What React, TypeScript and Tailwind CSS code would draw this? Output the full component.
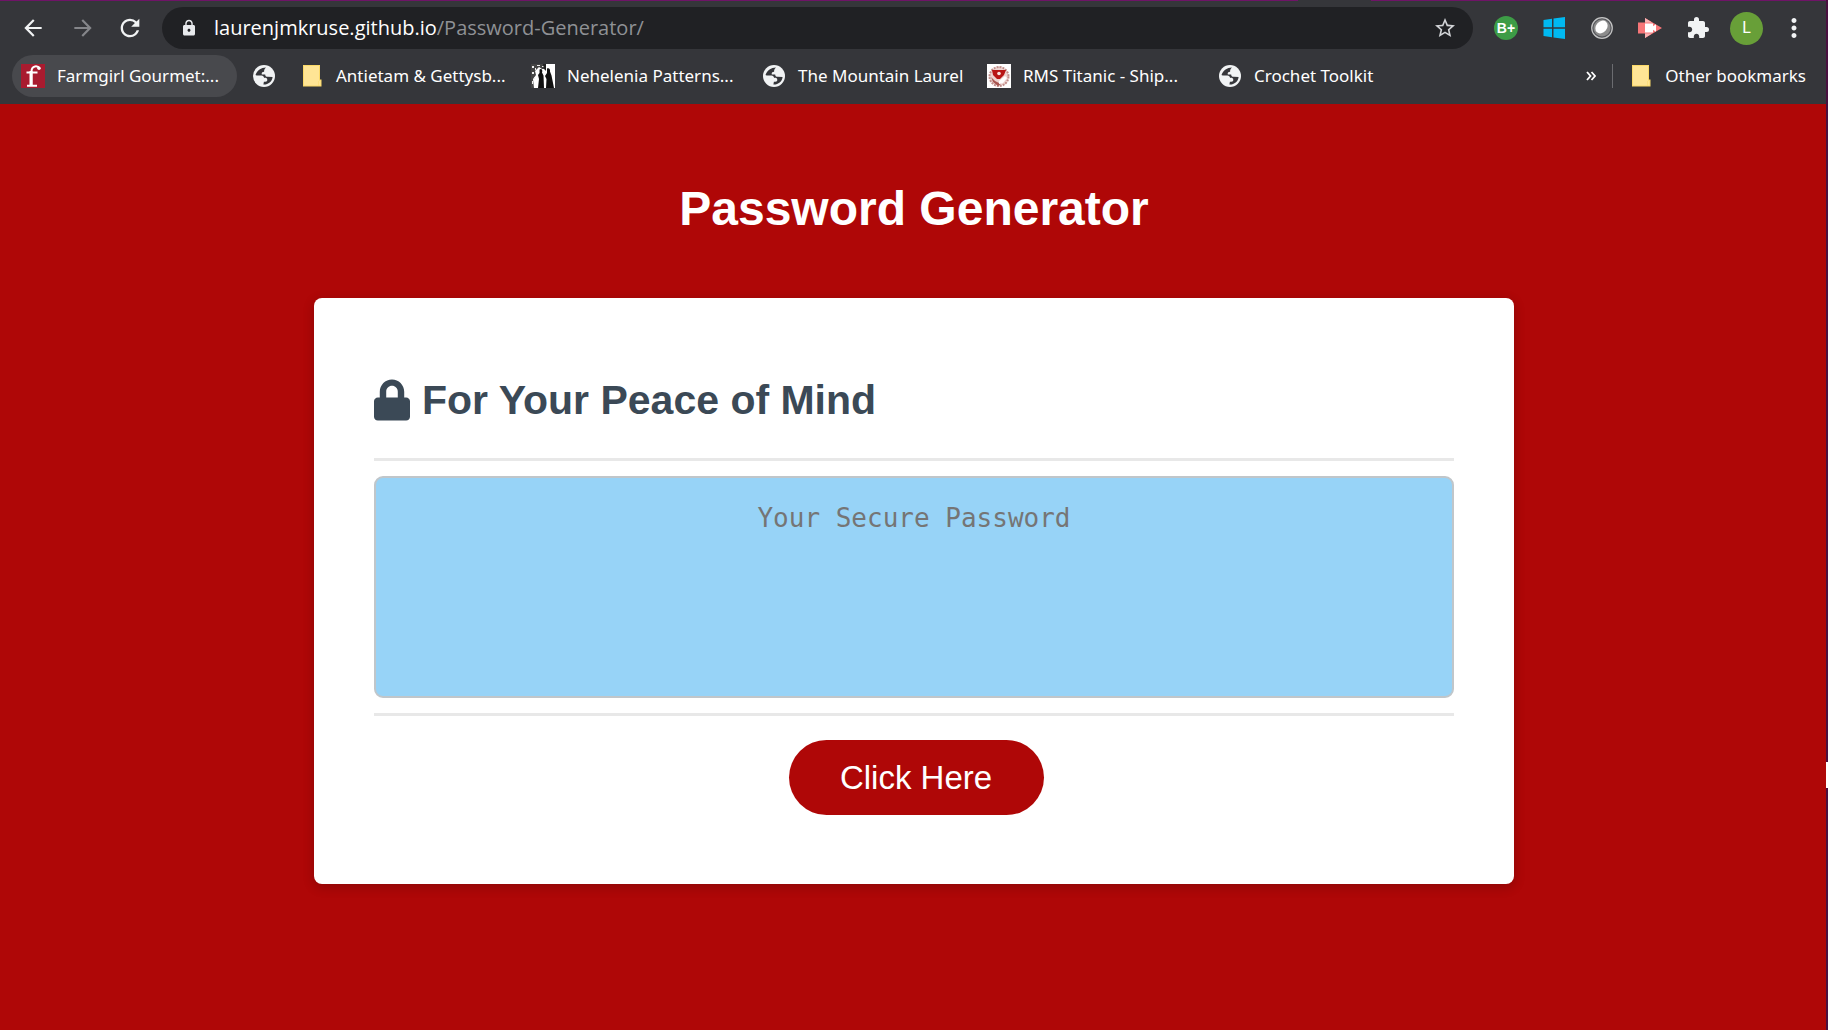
import React from "react";
import { FaLock } from "react-icons/fa";
import {
  MdArrowBack,
  MdArrowForward,
  MdRefresh,
  MdLock,
  MdStarBorder,
  MdExtension,
  MdMoreVert,
} from "react-icons/md";

function FolderIcon() {
  return (
    <svg viewBox="0 0 24 24" className="size-6 shrink-0" aria-hidden="true">
      <path d="M3 1h17v14.500h1.500v7H3z" fill="#fbd968" />
      <path d="M4 2h15v15H18v4.500H4z" fill="#ffe595" />
      <path d="M18.500 16.500h2v5h-2z" fill="#ffe595" />
    </svg>
  );
}

function GlobeIcon() {
  return (
    <svg viewBox="0 0 24 24" className="size-6 shrink-0" aria-hidden="true">
      <circle cx="12" cy="12" r="11" fill="#f1f3f4" />
      <path
        d="M14 3.500c-5 .2-8.600 2.500-10.500 7.500l1.200.5h4.800c1.600 0 2.300 1 2.600 2.400 1.700-.2 3.200.2 3.200 2 0 1.500-1.500 1.800-3.400 1.800l-.5 2.800c4.500.3 8.600-2.600 9.200-7.500l-4.800-.2c-1.800 0-2.600-.9-2.600-2.400H9.800c-.4-1.600.3-2.700 2.300-2.700 0-1.700.3-3 1.900-4.200z"
        fill="#35363a"
      />
    </svg>
  );
}

function FarmgirlIcon() {
  return (
    <svg viewBox="0 0 24 24" className="size-6 shrink-0" aria-hidden="true">
      <rect width="24" height="24" fill="#a91b2f" />
      <path
        d="M18.500 4.500C17 1.500 10.500 1 10.500 7.500v14M5.500 8.500h11M6 21.800h10"
        fill="none"
        stroke="#fff"
        strokeWidth="2"
      />
      <path d="M10 7v14.500" stroke="#fff" strokeWidth="3" />
      <circle cx="18" cy="4.300" r="1.700" fill="#fff" />
    </svg>
  );
}

function SilhouetteIcon() {
  return (
    <svg viewBox="0 0 24 24" className="size-6 shrink-0" aria-hidden="true">
      <rect width="24" height="24" fill="#fff" />
      <path d="M0 0h15v5h-4L8 3 4 7l1 4-3 4 1 9H0z" fill="#444" />
      <path d="M1 2h2v2H1zM4 4h1v2H4zM1 8h2v2H1zM3 13h1v2H3zM1 17h1v3H1zM6 1h3v1H6zM11 2h2v1h-2z" fill="#eee" />
      <path d="M8.500 5.500c2-1.500 3.500.5 2.500 3l1.500 3L13 24H7l1-9-1-4 1.500-2z" fill="#111" />
      <path d="M16 4.500c2-1 3.500.5 3 3l1.500 4L23 24h-8l.5-9L14 12l2-3z" fill="#111" />
      <path d="M12 0h3v7l-2-2z" fill="#222" />
    </svg>
  );
}

function TitanicIcon() {
  return (
    <svg viewBox="0 0 24 24" className="size-6 shrink-0" aria-hidden="true">
      <rect width="24" height="24" fill="#fff" />
      <circle cx="12" cy="12.500" r="9.500" fill="#eed3d0" stroke="#c08c88" strokeWidth="2" strokeDasharray="2 1" />
      <path d="M5 6h14l-2 5-4 4h-3l-4-4z" fill="#b81414" />
      <circle cx="12" cy="9.500" r="1.800" fill="#f7e3e0" />
      <path d="M4 13l4 4 6 3-3 2-5-4z" fill="#a85550" />
      <path d="M12 17l6-5 2 2-4 5-4 1z" fill="#fff" />
    </svg>
  );
}

const extensions = [
  {
    label: "Grade extension",
    icon: (
      <span className="flex size-6 items-center justify-center rounded-full bg-[#3d9c46] font-['Liberation_Sans'] text-sm font-bold text-white">
        B+
      </span>
    ),
  },
  {
    label: "Windows",
    icon: (
      <svg viewBox="0 0 24 24" className="size-6" aria-hidden="true">
        <path
          d="M1.500 4l8.500-1.200v8.400H1.500zM11.500 2.600L23 1v10.200H11.500zM1.500 12.800H10v8.400L1.500 20zM11.500 12.800H23V23l-11.500-1.600z"
          fill="#00b9f1"
        />
      </svg>
    ),
  },
  {
    label: "Sphere",
    icon: (
      <svg viewBox="0 0 24 24" className="size-6" aria-hidden="true">
        <circle cx="12" cy="12" r="10.300" fill="#55565a" stroke="#c4c4c4" strokeWidth="1.200" />
        <circle cx="12" cy="12" r="8.500" fill="#8c8c8c" />
        <ellipse cx="11.500" cy="11" rx="5.500" ry="7" transform="rotate(40 11.500 11)" fill="#fff" />
      </svg>
    ),
  },
  {
    label: "Screen recorder",
    icon: (
      <svg viewBox="0 0 24 24" className="size-6" aria-hidden="true">
        <path d="M0 6.500h7V2l17 10L7 22v-4.500H0z" fill="#f77678" />
        <path d="M7 2l7 4.500H7zM7 17.500h7L7 22z" fill="#fbb3b3" />
        <path d="M7 7.500h8v2.800l3-2v7.500l-3-2v2.800H7z" fill="#fff" />
      </svg>
    ),
  },
  { label: "Extensions", icon: <MdExtension className="size-6 text-[#f1f3f4]" /> },
];

const bookmarks = [
  { label: "Farmgirl Gourmet:...", icon: <FarmgirlIcon />, box: "w-[225px] rounded-full bg-[#48494d]" },
  { label: "", icon: <GlobeIcon />, box: "" },
  { label: "Antietam & Gettysb...", icon: <FolderIcon />, box: "w-[225px]" },
  { label: "Nehelenia Patterns...", icon: <SilhouetteIcon />, box: "w-[225px]" },
  { label: "The Mountain Laurel", icon: <GlobeIcon />, box: "w-[219px]" },
  { label: "RMS Titanic - Ship...", icon: <TitanicIcon />, box: "w-[225px]" },
  { label: "Crochet Toolkit", icon: <GlobeIcon />, box: "" },
];

function BrowserChrome() {
  return (
    <header className="bg-[#35363a] font-['Noto_Sans',sans-serif] text-white">
      <div className="flex h-px justify-between">
        <span className="w-[71%] bg-[#6f1467]" />
        <span className="w-[25%] bg-[#6f1467]" />
      </div>
      <div className="flex h-[54px] items-center pr-[19px] pl-5">
        <nav className="flex items-center gap-6" aria-label="History">
          <button type="button" aria-label="Back">
            <MdArrowBack className="size-[26px] text-[#f1f3f4]" />
          </button>
          <button type="button" aria-label="Forward">
            <MdArrowForward className="size-[26px] text-[#85868a]" />
          </button>
          <button type="button" aria-label="Reload" className="-ml-1">
            <MdRefresh className="size-7 text-[#f1f3f4]" />
          </button>
        </nav>
        <div className="ml-[18px] flex h-[42px] flex-1 items-center rounded-full bg-[#202124] pr-4 pl-[18px]">
          <MdLock className="size-[18px] text-[#e8eaed]" />
          <a href="#address" className="ml-4 flex-1 font-['Open_Sans',sans-serif] text-xl text-[#8f9195]">
            <span className="text-white">laurenjmkruse.github.io</span>/Password-Generator/
          </a>
          <button type="button" aria-label="Bookmark this page">
            <MdStarBorder className="size-6 text-[#d2d4d7]" />
          </button>
        </div>
        <div className="ml-[21px] flex items-center gap-6">
          {extensions.map((e) => (
            <button key={e.label} type="button" aria-label={e.label}>
              {e.icon}
            </button>
          ))}
        </div>
        <button
          type="button"
          className="ml-5 flex size-[33px] items-center justify-center rounded-full bg-[#689f38] font-[Roboto] text-base"
        >
          L
        </button>
        <button type="button" aria-label="Menu" className="ml-4">
          <MdMoreVert className="size-[30px] text-[#f1f3f4]" />
        </button>
      </div>
      <div className="flex h-[49px] items-start gap-1.5 pr-[22px] pl-3 text-[17px] whitespace-nowrap">
        {bookmarks.map((b, i) => (
          <a
            key={i}
            href="#bookmark"
            aria-label={b.label || "Bookmark"}
            className={"flex h-[42px] shrink-0 items-center gap-3 px-[9px] " + b.box}
          >
            {b.icon}
            {b.label && <span>{b.label}</span>}
          </a>
        ))}
        <div className="ml-auto flex h-[42px] items-center">
          <button type="button" aria-label="More bookmarks">
            <svg viewBox="0 0 10 10" className="size-2.5" aria-hidden="true">
              <path d="M1 1l3.500 4L1 9M5.500 1L9 5 5.500 9" fill="none" stroke="#fff" strokeWidth="1.800" />
            </svg>
          </button>
          <span className="ml-4 h-6 w-px bg-[#6b6c70]" />
          <a href="#other" className="ml-4 flex items-center gap-3">
            <FolderIcon />
            Other bookmarks
          </a>
        </div>
      </div>
    </header>
  );
}

export default function App() {
  return (
    <div className="relative flex min-h-screen flex-col bg-[#af0707] font-['Liberation_Sans',Arial,sans-serif]">
      <BrowserChrome />
      <main className="flex flex-1 flex-col items-center px-6">
        <h1 className="mt-[75px] text-center text-5xl leading-[60px] font-bold text-white">Password Generator</h1>
        <section className="mt-[59px] mb-16 w-full max-w-[1200px] rounded-lg bg-white px-[60px] pt-[75px] pb-[69px] shadow-[0_3px_12px_rgba(0,0,0,0.2)]">
          <h2 className="flex items-center gap-3 text-[41px] leading-[54px] font-bold text-[#3b4956]">
            <FaLock className="h-[42px] w-9" />
            For Your Peace of Mind
          </h2>
          <div className="mt-[31px] border-y-3 border-[#e8e8e8] py-[15px]">
            <textarea
              aria-label="Your Secure Password"
              placeholder="Your Secure Password"
              readOnly
              className="block h-[222px] w-full resize-none rounded-[9px] border-2 border-[#c0c6ca] bg-[#97d3f7] px-6 py-6 text-center font-['DejaVu_Sans_Mono',monospace] text-[26px] leading-8 placeholder:text-[#757575]"
            />
          </div>
          <div className="mt-6 flex justify-center pl-1">
            <button type="button" className="h-[75px] w-[255px] rounded-full bg-[#af0707] text-[33px] text-white">
              Click Here
            </button>
          </div>
        </section>
      </main>
      <div className="absolute inset-y-0 right-0 flex w-0.5 flex-col bg-[#4a1040]" aria-hidden="true">
        <span className="mt-[762px] h-[26px] bg-white" />
      </div>
    </div>
  );
}
